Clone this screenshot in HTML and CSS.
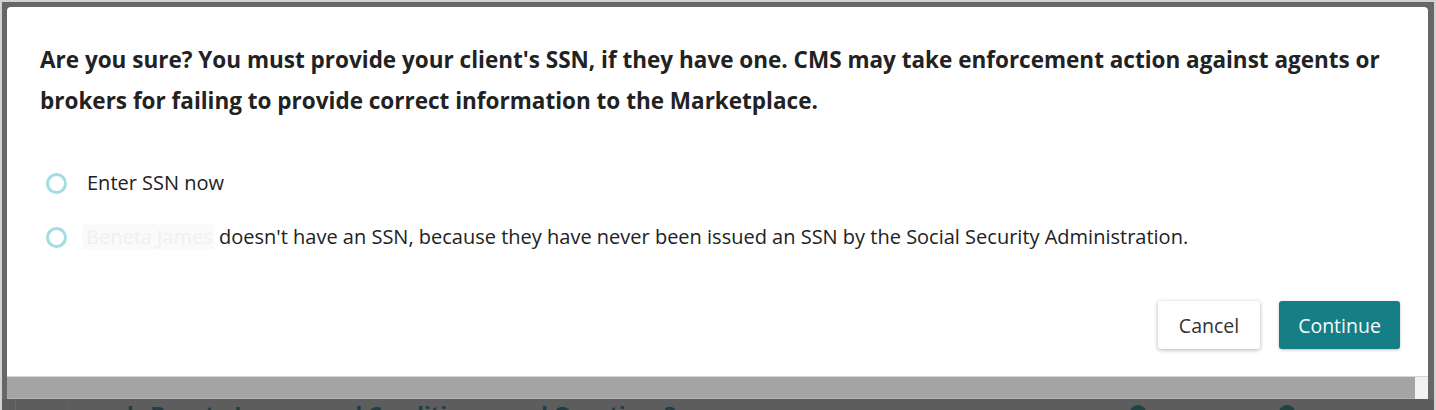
FILE: index.html
```html
<!DOCTYPE html>
<html lang="en">
<head>
    <meta charset="UTF-8">
    <title>Confirm SSN</title>
    <link rel="stylesheet" href="styles.css">
</head>
<body>
    <div class="screen">
        <div class="modal">
            <div class="modal-body">
                <p class="modal-question">Are you sure? You must provide your client's SSN, if they have one. CMS may take enforcement action against agents or brokers for failing to provide correct information to the Marketplace.</p>

                <div class="options">
                    <label class="option">
                        <span class="radio"></span>
                        <span class="option-text">Enter SSN now</span>
                    </label>
                    <label class="option">
                        <span class="radio"></span>
                        <span class="option-text"><span class="masked-name">Beneta James</span> doesn't have an SSN, because they have never been issued an SSN by the Social Security Administration.</span>
                    </label>
                </div>
            </div>

            <div class="modal-actions">
                <button class="btn btn-cancel">Cancel</button>
                <button class="btn btn-continue">Continue</button>
            </div>
        </div>

        <div class="modal-strip">
            <div class="strip-fill"></div>
            <div class="strip-end"></div>
        </div>

        <div class="page-behind">
            <span class="behind-col"></span>
            <span class="behind-text">ls Beneta James</span>
            <span class="behind-text">d Conditions</span>
            <span class="behind-text">d Questions?</span>
            <span class="behind-dot dot-one"></span>
            <span class="behind-dot dot-two"></span>
        </div>
    </div>
</body>
</html>
```

FILE: styles.css
```css
body {
    margin: 0;
    padding: 0;
    background-color: #d2d2d2;
    font-family: 'Open Sans', 'Liberation Sans', sans-serif;
    overflow: hidden;
}

.screen {
    margin: 2px 2px 0 2px;
    padding: 5px 6px 0 5px;
    height: 408px;
    background-color: #676767;
    box-sizing: border-box;
}

.modal {
    height: 369px;
    background-color: #fff;
    border-radius: 4px 4px 0 0;
    display: flex;
    flex-direction: column;
    justify-content: space-between;
}

.modal-body {
    padding: 32px 33px 0 33px;
}

.modal-question {
    margin: 0;
    font-size: 22.5px;
    font-weight: bold;
    line-height: 41px;
    color: #222;
}

.options {
    margin-top: 49px;
    display: flex;
    flex-direction: column;
    gap: 28px;
}

.option {
    display: flex;
    align-items: center;
    gap: 20px;
    height: 26px;
    padding-left: 6px;
    font-size: 20px;
    line-height: 26px;
    color: #222;
}

.radio {
    width: 15px;
    height: 15px;
    border: 3px solid #a4dce4;
    border-radius: 50%;
    flex-shrink: 0;
}

.masked-name {
    display: inline-block;
    padding: 0 1px 0 4px;
    margin-left: -5px;
    background-color: #fafafa;
    color: #f0f0f0;
}

.modal-actions {
    display: flex;
    justify-content: flex-end;
    gap: 19px;
    padding: 0 28px 27px 0;
}

.btn {
    font-family: inherit;
    font-size: 19.5px;
    height: 48px;
    border: none;
    border-radius: 3px;
    cursor: pointer;
}

.btn-cancel {
    width: 102px;
    background-color: #fff;
    color: #333;
    box-shadow: 0 1px 4px rgba(0, 0, 0, 0.3);
}

.btn-continue {
    width: 121px;
    background-color: #157f85;
    color: #f4fbfb;
    box-shadow: 0 1px 3px rgba(0, 0, 0, 0.25);
}

.modal-strip {
    display: flex;
    height: 22px;
    border-top: 1px solid #d6d6d6;
}

.strip-fill {
    flex: 1;
    background-color: #a4a4a4;
    border-bottom: 1px solid #b4b4b4;
}

.strip-end {
    width: 13px;
    background-color: #f1f1f1;
}

.page-behind {
    position: relative;
    height: 12px;
    margin: 0 -6px 0 -5px;
    background-color: #5d5d5d;
    display: flex;
    gap: 48px;
    padding-left: 125px;
    overflow: hidden;
}

.behind-col {
    position: absolute;
    left: 13px;
    top: 0;
    width: 52px;
    height: 12px;
    border-left: 1px solid #6a6a6a;
    border-right: 1px solid #626262;
}

.behind-text {
    margin-top: 3px;
    font-size: 22px;
    font-weight: bold;
    line-height: 22px;
    color: #1e3f42;
}

.behind-dot {
    position: absolute;
    top: 6px;
    width: 16px;
    height: 16px;
    border-radius: 50%;
    background-color: #1f4245;
}

.dot-one {
    left: 1128px;
}

.dot-two {
    left: 1277px;
}
```
